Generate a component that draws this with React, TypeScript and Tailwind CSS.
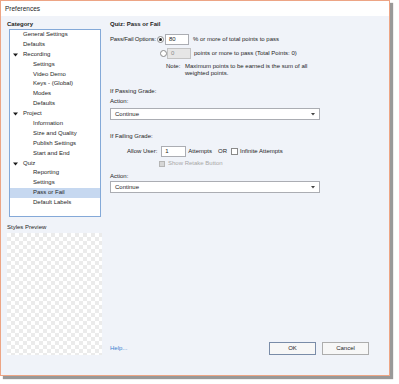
import React from 'react'

const font = { fontFamily: '"Liberation Sans", Arial, sans-serif' }

const tree: { label: string; level: number; open?: boolean; selected?: boolean }[] = [
  { label: 'General Settings', level: 1 },
  { label: 'Defaults', level: 1 },
  { label: 'Recording', level: 1, open: true },
  { label: 'Settings', level: 2 },
  { label: 'Video Demo', level: 2 },
  { label: 'Keys - (Global)', level: 2 },
  { label: 'Modes', level: 2 },
  { label: 'Defaults', level: 2 },
  { label: 'Project', level: 1, open: true },
  { label: 'Information', level: 2 },
  { label: 'Size and Quality', level: 2 },
  { label: 'Publish Settings', level: 2 },
  { label: 'Start and End', level: 2 },
  { label: 'Quiz', level: 1, open: true },
  { label: 'Reporting', level: 2 },
  { label: 'Settings', level: 2 },
  { label: 'Pass or Fail', level: 2, selected: true },
  { label: 'Default Labels', level: 2 },
]

function Arrow() {
  return (
    <svg width="5" height="4" viewBox="0 0 5 4" className="absolute left-[3px] top-[3px]">
      <path d="M0 0.5 L5 0.5 L2.5 3.5 Z" fill="#1a1a1a" />
    </svg>
  )
}

function Radio({ checked }: { checked?: boolean }) {
  return (
    <div className="w-[7px] h-[7px] rounded-full border border-[#8a8a8a] bg-white flex items-center justify-center shrink-0">
      {checked && <div className="w-[3px] h-[3px] rounded-full bg-[#1a1a1a]" />}
    </div>
  )
}

function Select() {
  return (
    <div className="w-[210px] h-[12px] border border-[#abadb3] bg-white flex items-center justify-between pl-[4px] pr-[4px]">
      <span>Continue</span>
      <svg width="4" height="3" viewBox="0 0 4 3">
        <path d="M0 0 L4 0 L2 2.5 Z" fill="#444" />
      </svg>
    </div>
  )
}

export default function App() {
  return (
    <div className="w-[399px] h-[384px] bg-white text-[6px] leading-[9px] text-[#1e1e1e] whitespace-nowrap" style={font}>
      <div className="w-[390px] h-[376px] border border-[#eda585] shadow-[3px_3px_1px_rgba(0,0,0,0.4)] flex flex-col">
        {/* title bar */}
        <div className="h-[15px] bg-white pl-[4px] flex items-center text-[6.5px]">Preferences</div>

        <div className="flex-1 flex bg-[#f0f3f9]">
          {/* left column */}
          <div className="w-[103px] pl-[6px] pt-[4px] flex flex-col">
            <div className="h-[9px] font-bold">Category</div>
            <div className="ml-[2px] w-[92px] h-[188px] border border-[#84a9d8] bg-white">
              {tree.map((t, i) => (
                <div
                  key={i}
                  className={`relative h-[9.9px] leading-[9.9px] ${t.selected ? 'bg-[#c6d8f0]' : ''} ${t.level === 1 ? 'pl-[13px]' : 'pl-[23px]'}`}
                >
                  {t.open && <Arrow />}
                  {t.label}
                </div>
              ))}
            </div>
            <div className="mt-[6px] h-[9px]">Styles Preview</div>
            <div className="mt-[1px] w-[95px] h-[122px] bg-[conic-gradient(#ebebeb_25%,#ffffff_0_50%,#ebebeb_0_75%,#ffffff_0)] bg-[length:8px_8px]" />
          </div>

          {/* right column */}
          <div className="flex-1 flex flex-col pl-[6px] pr-[20px] pb-[20px] pt-[4px]">
            <div className="h-[9px] font-bold">Quiz: Pass or Fail</div>

            <div className="mt-[4px] h-[12px] flex items-center">
              <div className="tracking-[-0.15px]">Pass/Fail Options:</div>
              <div className="ml-[1px]">
                <Radio checked />
              </div>
              <div className="ml-[1px] w-[24px] h-[11px] border border-[#abadb3] bg-white pl-[3px] leading-[9px]">80</div>
              <div className="ml-[4px]">% or more of total points to pass</div>
            </div>

            <div className="mt-[2px] h-[12px] flex items-center pl-[50px]">
              <Radio />
              <div className="w-[24px] h-[11px] border border-[#c3c3c3] bg-[#e6e6e6] pl-[3px] leading-[9px] text-[#8a8a8a]">0</div>
              <div className="ml-[3px]">points or more to pass (Total Points: 0)</div>
            </div>

            <div className="mt-[4px] pl-[56px] flex leading-[7px]">
              <div className="w-[19px]">Note:</div>
              <div>
                <div>Maximum points to be earned is the sum of all</div>
                <div>weighted points.</div>
              </div>
            </div>

            <div className="mt-[10px] h-[9px]">If Passing Grade:</div>
            <div className="mt-[1px] h-[9px]">Action:</div>
            <div className="mt-[2px]">
              <Select />
            </div>

            <div className="mt-[12px] h-[9px]">If Failing Grade:</div>
            <div className="mt-[4px] h-[12px] flex items-center pl-[17px]">
              <div>Allow User:</div>
              <div className="ml-[4px] w-[25px] h-[11px] border border-[#abadb3] bg-white pl-[3px] leading-[9px]">1</div>
              <div className="ml-[2px]">Attempts</div>
              <div className="ml-[6px]">OR</div>
              <div className="ml-[4px] w-[7px] h-[7px] border border-[#8a8a8a] bg-white" />
              <div className="ml-[2px]">Infinite Attempts</div>
            </div>
            <div className="mt-[2px] h-[9px] flex items-center pl-[49px]">
              <div className="w-[6px] h-[6px] border border-[#b5b5b5] bg-[#d6d6d6]" />
              <div className="ml-[3px] text-[#a8a8a8]">Show Retake Button</div>
            </div>
            <div className="mt-[4px] h-[9px]">Action:</div>
            <div>
              <Select />
            </div>

            <div className="mt-auto flex items-center">
              <div className="text-[#3b7fd0]">Help...</div>
              <div className="ml-auto flex gap-[6px]">
                <div className="w-[47px] h-[13px] border border-[#7a8ca8] bg-[#f7f7f7] flex items-center justify-center">OK</div>
                <div className="w-[47px] h-[13px] border border-[#adadad] bg-[#f7f7f7] flex items-center justify-center">Cancel</div>
              </div>
            </div>
          </div>
        </div>
      </div>
    </div>
  )
}
